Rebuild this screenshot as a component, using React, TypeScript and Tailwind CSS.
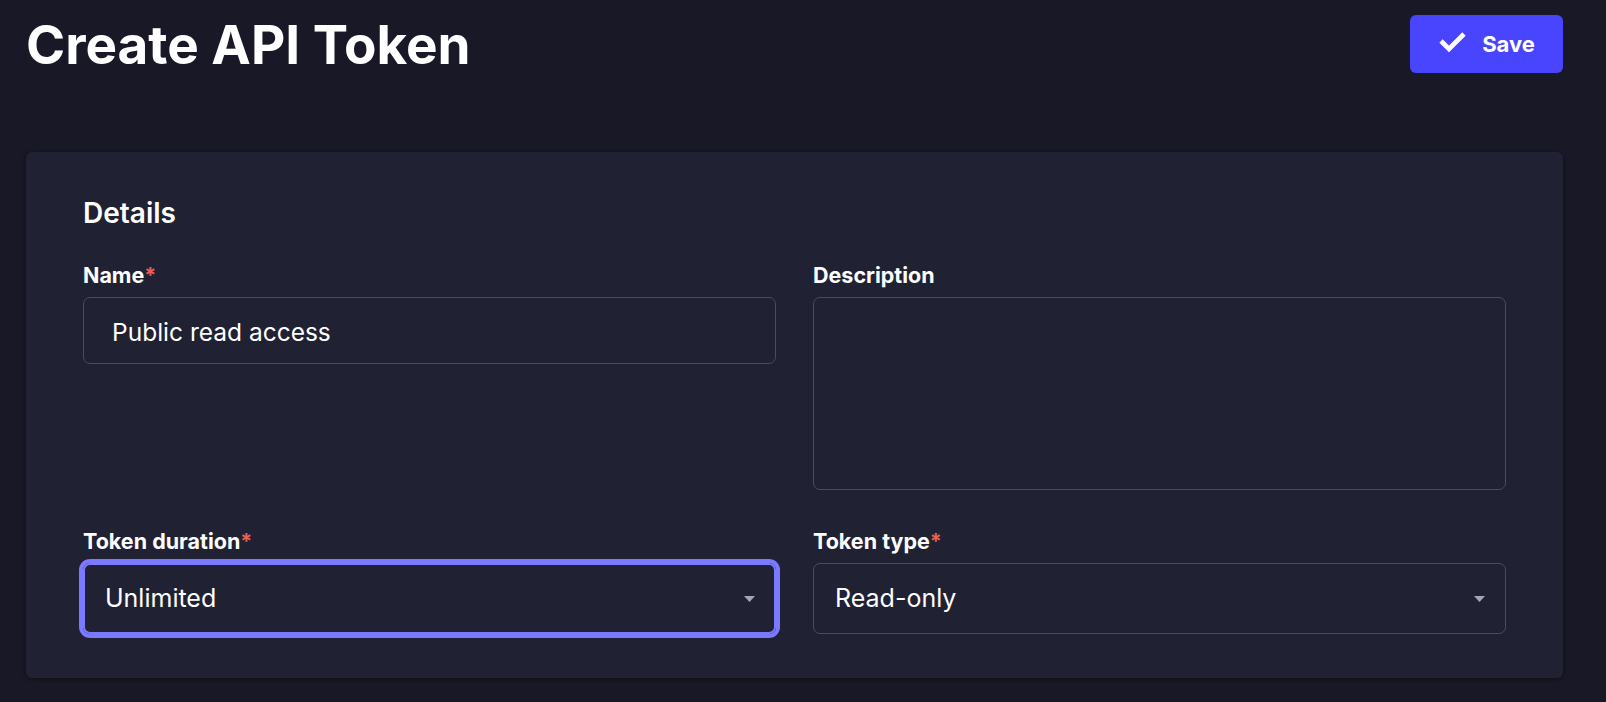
import React from "react";

function Caret() {
  return (
    <svg width="11" height="6" viewBox="0 0 11 6" className="shrink-0">
      <polygon points="0,0 11,0 5.5,6" fill="#a5a5ba" />
    </svg>
  );
}

function Label({ text, required }: { text: string; required?: boolean }) {
  return (
    <div className="text-[21.5px] leading-[26px] font-bold text-white">
      {text}
      {required && <span className="text-[#ee5e52]">*</span>}
    </div>
  );
}

export default function App() {
  return (
    <div className="min-h-screen bg-[#181826] pl-[26px] pr-[43px] pt-[13px] font-['Inter',sans-serif] text-white">
      <div className="flex items-start justify-between">
        <h1 className="text-[53px] leading-[64px] font-bold text-white">Create API Token</h1>
        <button className="mt-[2px] flex h-[58px] w-[153px] items-center justify-center gap-[16px] rounded-[6px] bg-[#4945ff] text-[22px] font-bold text-white">
          <svg width="28" height="22" viewBox="0 0 28 22" className="mb-[4px]">
            <polyline
              points="3,10 11,18 26,3"
              fill="none"
              stroke="#ffffff"
              strokeWidth="4.6"
              strokeLinejoin="miter"
            />
          </svg>
          <span>Save</span>
        </button>
      </div>

      <div className="mt-[75px] rounded-[6px] bg-[#212134] px-[57px] pt-[44px] pb-[44px] shadow-[0_1px_4px_rgba(0,0,0,0.35)]">
        <h2 className="text-[28px] leading-[34px] font-semibold text-white">Details</h2>
        <div className="mt-[32px] grid grid-cols-2 gap-x-[37px] gap-y-[38px]">
          <div>
            <Label text="Name" required />
            <input
              readOnly
              value="Public read access"
              className="mt-[9px] block h-[67px] w-full rounded-[7px] border border-[#4a4a6a] bg-[#212134] pl-[28px] pt-[3px] text-[24.5px] text-white outline-none"
            />
          </div>
          <div>
            <Label text="Description" />
            <textarea
              readOnly
              className="mt-[9px] block h-[193px] w-full resize-none rounded-[7px] border border-[#4a4a6a] bg-[#212134] outline-none"
            />
          </div>
          <div>
            <Label text="Token duration" required />
            <div className="mt-[9px] flex h-[71px] items-center justify-between rounded-[7px] border-2 border-[#7b79ff] pl-[20px] pr-[19px] shadow-[0_0_0_4px_#7b79ff] text-[25px] text-white">
              <span>Unlimited</span>
              <Caret />
            </div>
          </div>
          <div>
            <Label text="Token type" required />
            <div className="mt-[9px] flex h-[71px] items-center justify-between rounded-[7px] border border-[#4a4a6a] pl-[21px] pr-[20px] text-[25px] text-white">
              <span>Read-only</span>
              <Caret />
            </div>
          </div>
        </div>
      </div>
    </div>
  );
}
